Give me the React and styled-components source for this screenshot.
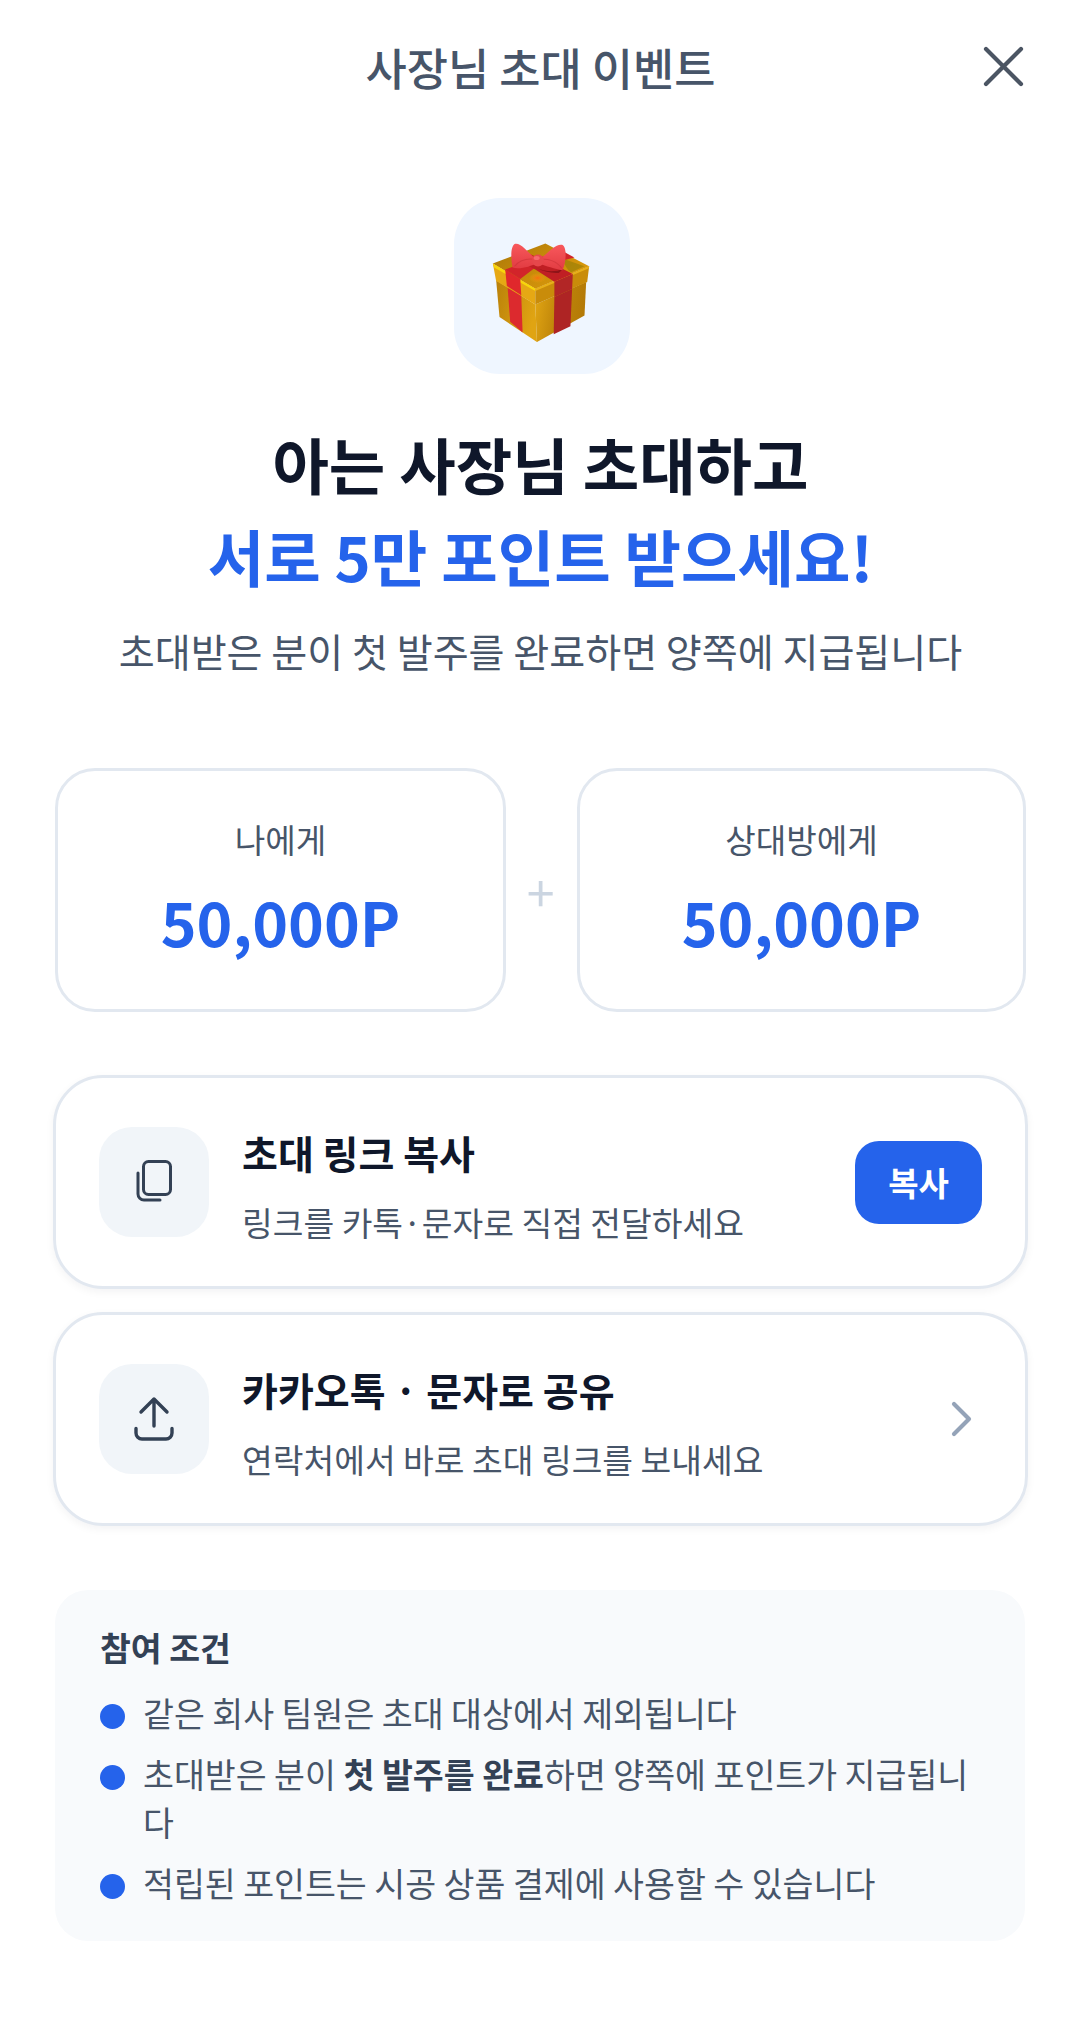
import React from "react";
import styled, { createGlobalStyle } from "styled-components";

const Global = createGlobalStyle`
  html, body { margin: 0; padding: 0; background: #fff; }
  * { box-sizing: border-box; }
  body { font-family: "Noto Sans CJK KR", "Noto Sans", sans-serif; }
`;

const Page = styled.div`
  width: 1081px;
  height: 2030px;
  background: #fff;
  overflow: hidden;
`;
const Header = styled.header`
  position: relative;
  height: 135px;
  display: flex;
  align-items: center;
  justify-content: center;
`;
const HeaderTitle = styled.h1`
  margin: -2px 0 0;
  font-size: 44.8px;
  font-weight: 500;
  line-height: 64px;
  color: #475569;
`;
const CloseButton = styled.button`
  position: absolute;
  right: 56px;
  top: 44px;
  width: 44px;
  height: 44px;
  padding: 0;
  border: 0;
  background: none;
  display: flex;
  align-items: center;
  justify-content: center;
`;
const Hero = styled.section`
  display: flex;
  flex-direction: column;
  align-items: center;
  padding-top: 63px;
`;
const GiftTile = styled.div`
  width: 176px;
  height: 176px;
  margin-left: 2px;
  border-radius: 46px;
  background: #eff6ff;
  display: flex;
  align-items: center;
  justify-content: center;
`;
const Headline = styled.h2`
  margin: 44px 0 0;
  font-size: 61.4px;
  line-height: 92px;
  font-weight: 700;
  color: #0f172a;
  text-align: center;
`;
const Accent = styled.span`
  display: block;
  color: #2563eb;
`;
const Subtitle = styled.p`
  margin: 19px 0 0;
  font-size: 39.1px;
  line-height: 58px;
  color: #475569;
  font-weight: 400;
`;
const Rewards = styled.section`
  margin: 89px 55px 0 55px;
  display: grid;
  grid-template-columns: 451px 1fr 449px;
  align-items: center;
`;
const RewardCard = styled.div`
  height: 244px;
  border: 3px solid #e2e8f0;
  border-radius: 40px;
  display: flex;
  flex-direction: column;
  align-items: center;
  padding-top: 44px;
`;
const RewardLabel = styled.div`
  font-size: 33.2px;
  line-height: 48px;
  color: #475569;
`;
const RewardValue = styled.div`
  font-size: 60.8px;
  line-height: 84px;
  font-weight: 700;
  color: #2563eb;
  margin-top: 16px;
`;
const Plus = styled.div`
  text-align: center;
  font-size: 50px;
  line-height: 50px;
  margin-left: -2px;
  color: #cbd5e1;
  font-weight: 400;
`;
const Actions = styled.section`
  margin: 63px 53px 0;
  display: flex;
  flex-direction: column;
  gap: 23px;
`;
const ActionCard = styled.div`
  height: 214px;
  border: 3px solid #e2e8f0;
  border-radius: 50px;
  background: #fff;
  box-shadow: 0 3px 8px rgba(15, 23, 42, 0.05);
  display: flex;
  align-items: center;
  padding: 0 44px 0 43px;
`;
const IconTile = styled.div`
  flex: none;
  width: 110px;
  height: 110px;
  border-radius: 33px;
  background: #f1f5f9;
  display: flex;
  align-items: center;
  justify-content: center;
`;
const ActionText = styled.div`
  flex: 1;
  margin-left: 33px;
  padding-top: 5px;
`;
const ActionTitle = styled.div`
  font-size: 39px;
  line-height: 58px;
  font-weight: 700;
  color: #0f172a;
`;
const ActionSub = styled.div`
  font-size: 33.4px;
  line-height: 48px;
  color: #475569;
  margin-top: 17px;
`;
const CopyButton = styled.button`
  flex: none;
  width: 127px;
  height: 83px;
  margin-right: -1px;
  border: 0;
  border-radius: 24px;
  background: #2563eb;
  color: #fff;
  font-family: inherit;
  font-size: 33px;
  font-weight: 700;
  padding: 0;
`;
const ChevronSlot = styled.div`
  flex: none;
  display: flex;
  margin-right: 7px;
`;
const Info = styled.section`
  margin: 64px 56px 0 55px;
  height: 351px;
  border-radius: 33px;
  background: #f8fafc;
  padding: 33px 44px 0 45px;
`;
const InfoTitle = styled.h3`
  margin: 0 0 18px;
  font-size: 33.5px;
  line-height: 48px;
  font-weight: 700;
  color: #334155;
`;
const List = styled.ul`
  margin: 0;
  padding: 0;
  list-style: none;
  display: flex;
  flex-direction: column;
  gap: 13px;
`;
const Item = styled.li`
  display: flex;
  font-size: 33.6px;
  line-height: 48px;
  color: #475569;
`;
const Dot = styled.span`
  flex: none;
  width: 25px;
  height: 25px;
  margin: 15px 18px 0 0;
  border-radius: 50%;
  background: #2563eb;
`;
const Strong = styled.strong`
  font-weight: 700;
  color: #334155;
`;

const GiftIcon = () => (
  <svg width="176" height="176" viewBox="102 54 526 526" aria-hidden="true">
    <defs>
      <linearGradient id="bodyL" x1="0" y1="0" x2="1" y2="0.4">
        <stop offset="0" stopColor="#b9800a" />
        <stop offset="1" stopColor="#e0a412" />
      </linearGradient>
      <linearGradient id="bodyR" x1="0" y1="0" x2="1" y2="0.2">
        <stop offset="0" stopColor="#e4a814" />
        <stop offset="0.5" stopColor="#c0860a" />
        <stop offset="1" stopColor="#b47a07" />
      </linearGradient>
      <linearGradient id="lidTop" x1="0" y1="0" x2="1" y2="0.6">
        <stop offset="0" stopColor="#a97708" />
        <stop offset="0.6" stopColor="#c98c0a" />
        <stop offset="1" stopColor="#d99a0c" />
      </linearGradient>
      <radialGradient id="glow" cx="0.5" cy="0.5" r="0.5">
        <stop offset="0" stopColor="#f66f10" />
        <stop offset="1" stopColor="#f0a410" stopOpacity="0" />
      </radialGradient>
      <linearGradient id="bow" x1="0" y1="0" x2="0" y2="1">
        <stop offset="0" stopColor="#f8585c" />
        <stop offset="1" stopColor="#e23c42" />
      </linearGradient>
    </defs>
    <polygon points="228,300 345,372 350,484 238,410" fill="url(#bodyL)" />
    <polygon points="345,372 497,305 492,405 350,484" fill="url(#bodyR)" />
    <polygon points="262,318 303,345 307,456 270,424" fill="#dc2a2e" />
    <polygon points="402,350 455,326 450,437 400,461" fill="#ae2424" />
    <polygon points="218,250 375,190 506,258 345,325" fill="url(#lidTop)" />
    <polygon points="218,250 345,325 345,372 228,302" fill="#e6a814" />
    <polygon points="345,325 506,258 500,305 345,372" fill="#c98c0a" />
    <polygon points="218,250 345,325 345,332 222,262" fill="#f8d60a" />
    <polygon points="345,325 506,258 505,264 345,332" fill="#e8b018" />
    <polygon points="255,268 300,296 303,345 260,317" fill="#e0282c" />
    <polygon points="402,304 457,281 455,326 402,350" fill="#b22626" />
    <polygon points="255,268 300,296 345,262 462,232 425,212 330,240" fill="#d2242a" />
    <polygon points="402,304 457,281 395,250 330,222 290,238 345,268" fill="#c01f24" />
    <ellipse cx="352" cy="293" rx="26" ry="15" fill="url(#glow)" />
    <path d="M430 236 L492 258 L452 276 Q430 260 430 236 Z" fill="#8d7a08" opacity="0.55" />
    <path d="M345 262 Q390 282 428 266 L415 278 Q380 280 345 262 Z" fill="#8e1418" />
    <path d="M348 236 C326 222 305 188 285 191 C270 197 272 236 277 262 C300 268 332 258 350 248 Z" fill="url(#bow)" />
    <path d="M358 236 C380 222 405 190 425 194 C440 200 438 245 426 270 C405 266 375 258 358 250 Z" fill="url(#bow)" />
    <path d="M348 238 C325 234 300 238 283 258" stroke="#c93237" strokeWidth="3" fill="none" opacity="0.6" />
    <path d="M358 238 C382 234 408 242 424 264" stroke="#c93237" strokeWidth="3" fill="none" opacity="0.6" />
    <circle cx="353" cy="241" r="18" fill="#e6474b" />
    <ellipse cx="349" cy="233" rx="9" ry="6" fill="#f5696c" />
  </svg>
);

const CloseIcon = () => (
  <svg width="44" height="44" viewBox="0 0 44 44" fill="none" aria-hidden="true">
    <path d="M5 5 L40 40 M40 5 L5 40" stroke="#4b5563" strokeWidth="4.2" strokeLinecap="round" />
  </svg>
);
const CopyIcon = () => (
  <svg width="44" height="44" viewBox="0 0 44 44" fill="none" stroke="#334155" strokeWidth="3" strokeLinecap="round" strokeLinejoin="round" aria-hidden="true">
    <rect x="11.5" y="1.5" width="27" height="33" rx="5" />
    <path d="M6 13 V34 a6 6 0 0 0 6 6 H28" />
  </svg>
);
const ShareIcon = () => (
  <svg width="44" height="48" viewBox="0 0 44 48" fill="none" stroke="#334155" strokeWidth="3.4" strokeLinecap="round" strokeLinejoin="round" aria-hidden="true">
    <path d="M22 4 V31 M9 17 L22 4 L35 17" />
    <path d="M4 33.5 V38 a6 6 0 0 0 6 6 H34 a6 6 0 0 0 6 -6 V33.5" />
  </svg>
);
const ChevronIcon = () => (
  <svg width="24" height="38" viewBox="0 0 24 38" fill="none" aria-hidden="true">
    <path d="M4 4 L19 19 L4 34" stroke="#94a3b8" strokeWidth="4.2" strokeLinecap="round" strokeLinejoin="round" />
  </svg>
);

export default function App() {
  return (
    <Page>
      <Global />
      <Header>
        <HeaderTitle>사장님 초대 이벤트</HeaderTitle>
        <CloseButton aria-label="닫기"><CloseIcon /></CloseButton>
      </Header>
      <Hero>
        <GiftTile><GiftIcon /></GiftTile>
        <Headline>
          아는 사장님 초대하고
          <Accent>서로 5만 포인트 받으세요!</Accent>
        </Headline>
        <Subtitle>초대받은 분이 첫 발주를 완료하면 양쪽에 지급됩니다</Subtitle>
      </Hero>
      <Rewards>
        <RewardCard>
          <RewardLabel>나에게</RewardLabel>
          <RewardValue>50,000P</RewardValue>
        </RewardCard>
        <Plus>+</Plus>
        <RewardCard>
          <RewardLabel>상대방에게</RewardLabel>
          <RewardValue>50,000P</RewardValue>
        </RewardCard>
      </Rewards>
      <Actions>
        <ActionCard>
          <IconTile><CopyIcon /></IconTile>
          <ActionText>
            <ActionTitle>초대 링크 복사</ActionTitle>
            <ActionSub>링크를 카톡·문자로 직접 전달하세요</ActionSub>
          </ActionText>
          <CopyButton>복사</CopyButton>
        </ActionCard>
        <ActionCard>
          <IconTile><ShareIcon /></IconTile>
          <ActionText>
            <ActionTitle>카카오톡 · 문자로 공유</ActionTitle>
            <ActionSub>연락처에서 바로 초대 링크를 보내세요</ActionSub>
          </ActionText>
          <ChevronSlot><ChevronIcon /></ChevronSlot>
        </ActionCard>
      </Actions>
      <Info>
        <InfoTitle>참여 조건</InfoTitle>
        <List>
          <Item><Dot /><span>같은 회사 팀원은 초대 대상에서 제외됩니다</span></Item>
          <Item><Dot /><span>초대받은 분이 <Strong>첫 발주를 완료</Strong>하면 양쪽에 포인트가 지급됩니다</span></Item>
          <Item><Dot /><span>적립된 포인트는 시공 상품 결제에 사용할 수 있습니다</span></Item>
        </List>
      </Info>
    </Page>
  );
}
